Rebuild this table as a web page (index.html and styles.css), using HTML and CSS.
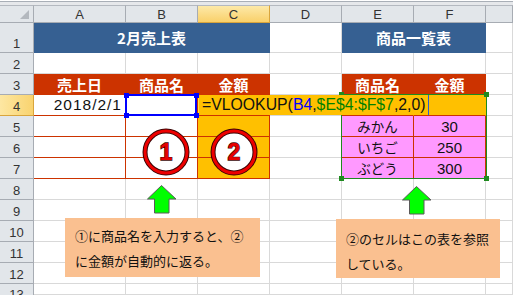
FILE: index.html
```html
<!DOCTYPE html>
<html lang="ja">
<head>
<meta charset="utf-8">
<title>VLOOKUP</title>
<link rel="stylesheet" href="styles.css">
</head>
<body>
<div class="sheet">
  <div class="strip"></div>

  <div class="hd corner"><span class="tri"></span></div>
  <div class="hd col">A</div>
  <div class="hd col">B</div>
  <div class="hd col sel">C</div>
  <div class="hd col">D</div>
  <div class="hd col">E</div>
  <div class="hd col">F</div>
  <div class="hd col"></div>

  <div class="hd row">1</div>
  <div class="c title span3">2月売上表</div>
  <div class="c"></div>
  <div class="c title span2">商品一覧表</div>
  <div class="c"></div>

  <div class="hd row">2</div>
  <div class="c"></div><div class="c"></div><div class="c"></div><div class="c"></div><div class="c"></div><div class="c"></div><div class="c"></div>

  <div class="hd row">3</div>
  <div class="c th">売上日</div>
  <div class="c th">商品名</div>
  <div class="c th">金額</div>
  <div class="c"></div>
  <div class="c th">商品名</div>
  <div class="c th">金額</div>
  <div class="c"></div>

  <div class="hd row sel">4</div>
  <div class="c rb date">2018/2/1</div>
  <div class="c rb ref"><i class="h tl"></i><i class="h tr"></i><i class="h bl"></i><i class="h br"></i></div>
  <div class="c yel rb fx"><span class="fxt">=VLOOKUP(<b class="bl4">B4</b>,<b class="gr">$E$4:$F$7</b>,2,0)</span></div>
  <div class="c yel d4"></div>
  <div class="c yel e4"></div>
  <div class="c yel e4"></div>
  <div class="c"></div>

  <div class="hd row">5</div>
  <div class="c rb"></div><div class="c rb"></div><div class="c yel rb"></div><div class="c"></div>
  <div class="c pk rb">みかん</div><div class="c pk rb num">30</div><div class="c"></div>

  <div class="hd row">6</div>
  <div class="c rb"></div><div class="c rb"></div><div class="c yel rb"></div><div class="c"></div>
  <div class="c pk rb">いちご</div><div class="c pk rb num">250</div><div class="c"></div>

  <div class="hd row">7</div>
  <div class="c rb"></div><div class="c rb"></div><div class="c yel rb"></div><div class="c"></div>
  <div class="c pk rb">ぶどう</div><div class="c pk rb num">300</div><div class="c"></div>

  <div class="hd row">8</div>
  <div class="c"></div><div class="c"></div><div class="c"></div><div class="c"></div><div class="c"></div><div class="c"></div><div class="c"></div>
  <div class="hd row">9</div>
  <div class="c"></div><div class="c"></div><div class="c"></div><div class="c"></div><div class="c"></div><div class="c"></div><div class="c"></div>
  <div class="hd row">10</div>
  <div class="c"></div><div class="c"></div><div class="c"></div><div class="c"></div><div class="c"></div><div class="c"></div><div class="c"></div>
  <div class="hd row">11</div>
  <div class="c"></div><div class="c"></div><div class="c"></div><div class="c"></div><div class="c"></div><div class="c"></div><div class="c"></div>
  <div class="hd row">12</div>
  <div class="c"></div><div class="c"></div><div class="c"></div><div class="c"></div><div class="c"></div><div class="c"></div><div class="c"></div>
  <div class="hd row r13"><span>13</span></div>
  <div class="c"></div><div class="c"></div><div class="c"></div><div class="c"></div><div class="c"></div><div class="c"></div><div class="c"></div>

  <!-- overlays -->
  <div class="range"><i class="g gtl"></i><i class="g gtr"></i><i class="g gbl"></i><i class="g gbr"></i></div>

  <svg class="circ c1" width="48" height="48" viewBox="0 0 48 48">
    <circle cx="24" cy="24" r="21" fill="#fff" stroke="#3a0505" stroke-width="5"/>
    <circle cx="24" cy="24" r="21" fill="none" stroke="#ee0000" stroke-width="3"/>
    <text x="24" y="32" text-anchor="middle" class="cn">1</text>
  </svg>
  <svg class="circ c2" width="48" height="48" viewBox="0 0 48 48">
    <circle cx="24" cy="24" r="21" fill="#fff" stroke="#3a0505" stroke-width="5"/>
    <circle cx="24" cy="24" r="21" fill="none" stroke="#ee0000" stroke-width="3"/>
    <text x="24" y="32" text-anchor="middle" class="cn">2</text>
  </svg>

  <svg class="arrow a1" width="30" height="29" viewBox="0 0 30 29">
    <polygon points="14.5,0.5 29,14 22,14 22,28 7.5,28 7.5,14 0.5,14" fill="#00ff00" stroke="#5a5a5a" stroke-width="1"/>
  </svg>
  <svg class="arrow a2" width="30" height="29" viewBox="0 0 30 29">
    <polygon points="14.5,0.5 29,14 22,14 22,28 7.5,28 7.5,14 0.5,14" fill="#00ff00" stroke="#5a5a5a" stroke-width="1"/>
  </svg>

  <div class="note n1">①に商品名を入力すると、②<br>に金額が自動的に返る。</div>
  <div class="note n2">②のセルはこの表を参照<br>している。</div>
</div>
</body>
</html>
```

FILE: styles.css
```css
* { box-sizing: border-box; margin: 0; padding: 0; }
html, body { width: 513px; height: 295px; overflow: hidden; background: #fff; }
body { font-family: "Liberation Sans", Arial, sans-serif; }

.sheet {
  position: relative;
  display: grid;
  grid-template-columns: 34px 92px 72px 72px 72px 72px 72px 1fr;
  grid-template-rows: 5px 18px 30px repeat(11, 21px) 11px;
  width: 513px;
  height: 295px;
  overflow: hidden;
}

.strip {
  grid-column: 1 / -1;
  background: linear-gradient(#ffffff 0 1px, #a9afb7 1px 2px, #e6e8eb 2px);
}

/* headers */
.hd {
  background: #e2e6ea;
  border-right: 1px solid #a7acb3;
  border-bottom: 1px solid #a7acb3;
  color: #333;
  font-size: 13px;
  line-height: 15px;
  display: flex;
  justify-content: center;
}
.col { border-top: 1px solid #b4b9c0; align-items: center; }
.corner { border-top: 1px solid #b4b9c0; position: relative; }
.tri {
  position: absolute;
  right: 4px;
  bottom: 3px;
  width: 0;
  height: 0;
  border-left: 9px solid transparent;
  border-bottom: 9px solid #b3b8be;
}
.row { align-items: flex-end; padding-bottom: 1px; }
.row.r13 {
  align-items: flex-start;
  padding: 3px 0 0;
  overflow: hidden;
  border-bottom: 0;
}
.hd.sel {
  background: linear-gradient(#fde9a8, #f9d06a);
  border-right-color: #d9a53c;
  border-bottom-color: #d9a53c;
}
.row.sel { background: linear-gradient(90deg, #fde7a2, #f9d36f); }

/* cells */
.c {
  border-right: 1px solid #d9d9d9;
  border-bottom: 1px solid #d9d9d9;
  display: flex;
  align-items: center;
  justify-content: center;
  font-family: "Noto Sans CJK JP", sans-serif;
  font-size: 13.5px;
  color: #111;
  white-space: nowrap;
}
.span3 { grid-column: span 3; }
.span2 { grid-column: span 2; }

.title {
  background: #366092;
  border-color: #366092;
  color: #fff;
  font-weight: 700;
  font-size: 15px;
}
.th {
  background: #cc3300;
  border-color: #cc3300;
  color: #fff;
  font-weight: 700;
  font-size: 15px;
}
.rb { border-right-color: #cc3300; border-bottom-color: #cc3300; }
.yel { background: #ffc000; }
.d4 { border-right-color: #ffc000; }
.e4 { border-right-color: #ffc000; border-bottom-color: #cc3300; }
.pk { background: #ff99ff; }
.num { font-family: "Liberation Sans", Arial, sans-serif; font-size: 15px; }

.date {
  justify-content: flex-end;
  padding-right: 3px;
  font-family: "Liberation Sans", Arial, sans-serif;
  font-size: 15.5px;
  letter-spacing: 1px;
}

/* B4 reference box */
.ref { position: relative; }
.ref::after {
  content: "";
  position: absolute;
  left: -1px;
  top: -1px;
  right: 0;
  bottom: -1px;
  border: 2px solid #0000ff;
}
.h {
  position: absolute;
  width: 5px;
  height: 5px;
  background: #0000ff;
  z-index: 3;
}
.h.tl { left: -2px; top: -2px; }
.h.tr { right: -2px; top: -2px; }
.h.bl { left: -2px; bottom: -3px; }
.h.br { right: -2px; bottom: -3px; }

/* formula */
.fx {
  justify-content: flex-start;
  position: relative;
  z-index: 2;
  overflow: visible;
}
.fxt {
  flex: none;
  width: 231px;
  height: 20px;
  display: flex;
  align-items: center;
  padding-left: 3px;
  background: #ffc000;
  border-left: 1px solid #ffe14a;
  border-right: 1px solid #2a5fd0;
  font-family: "Liberation Sans", Arial, sans-serif;
  font-size: 15.8px;
  color: #111;
}
.fxt b { font-weight: 400; }
.bl4 { color: #0000ff; }
.gr { color: #008000; }

/* green range box E4:F7 */
.range {
  position: absolute;
  left: 341px;
  top: 94px;
  width: 146px;
  height: 85px;
  border: 1.5px solid #1f8a1f;
  z-index: 1;
}
.g {
  position: absolute;
  width: 5px;
  height: 5px;
  background: #1f8a1f;
}
.gtl { left: -3px; top: -3px; }
.gtr { right: -3px; top: -3px; }
.gbl { left: -3px; bottom: -3px; }
.gbr { right: -3px; bottom: -3px; }

/* circles */
.circ { position: absolute; top: 128px; z-index: 4; }
.c1 { left: 142px; }
.c2 { left: 210px; }
.cn {
  font-family: "Liberation Sans", Arial, sans-serif;
  font-weight: 700;
  font-size: 23px;
  fill: #e60000;
  stroke: #3a0505;
  stroke-width: 1.3px;
  paint-order: stroke;
}

/* arrows */
.arrow { position: absolute; z-index: 4; }
.a1 { left: 147px; top: 185px; }
.a2 { left: 402px; top: 186px; }

/* callouts */
.note {
  position: absolute;
  z-index: 4;
  background: #fac090;
  font-family: "Noto Sans CJK JP", sans-serif;
  font-size: 13px;
  line-height: 25px;
  color: #111;
  padding-left: 10px;
  white-space: nowrap;
}
.n1 { left: 65px; top: 218px; width: 195px; height: 59px; padding-top: 5px; }
.n2 { left: 336px; top: 219px; width: 164px; height: 59px; padding-top: 7px; }
```
